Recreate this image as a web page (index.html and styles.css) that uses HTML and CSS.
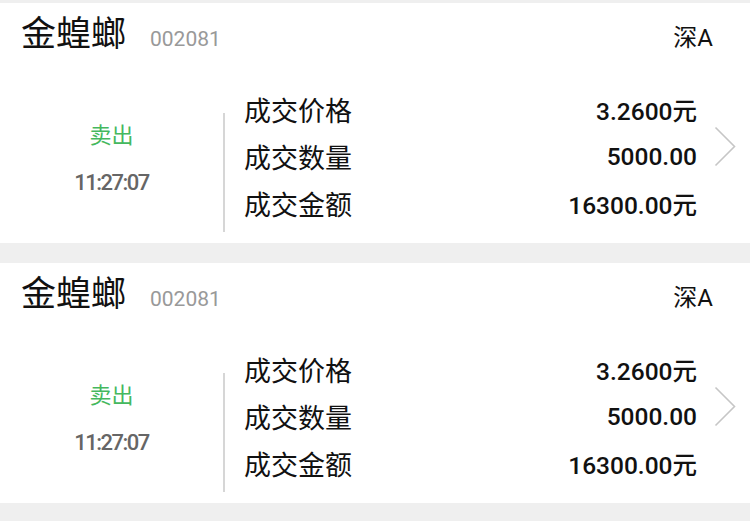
FILE: index.html
```html
<!DOCTYPE html>
<html lang="zh-CN">
<head>
<meta charset="utf-8">
<title>成交记录</title>
<link rel="stylesheet" href="styles.css">
</head>
<body>
<div class="list">
  <div class="card">
    <div class="head">
      <span class="name">金蝗螂</span>
      <span class="code">002081</span>
      <span class="market">深A</span>
    </div>
    <div class="body">
      <div class="side">
        <div class="dir">卖出</div>
        <div class="time">11:27:07</div>
      </div>
      <div class="divider"></div>
      <div class="info">
        <div class="row"><span class="label">成交价格</span><span class="val">3.2600元</span></div>
        <div class="row"><span class="label">成交数量</span><span class="val">5000.00</span></div>
        <div class="row"><span class="label">成交金额</span><span class="val">16300.00元</span></div>
      </div>
      <div class="arrow">
        <svg width="22" height="42" viewBox="0 0 22 42"><polyline points="1.5,1.5 20.5,20.5 1.5,39.5" fill="none" stroke="#c6c6c6" stroke-width="1.6"/></svg>
      </div>
    </div>
  </div>
  <div class="card">
    <div class="head">
      <span class="name">金蝗螂</span>
      <span class="code">002081</span>
      <span class="market">深A</span>
    </div>
    <div class="body">
      <div class="side">
        <div class="dir">卖出</div>
        <div class="time">11:27:07</div>
      </div>
      <div class="divider"></div>
      <div class="info">
        <div class="row"><span class="label">成交价格</span><span class="val">3.2600元</span></div>
        <div class="row"><span class="label">成交数量</span><span class="val">5000.00</span></div>
        <div class="row"><span class="label">成交金额</span><span class="val">16300.00元</span></div>
      </div>
      <div class="arrow">
        <svg width="22" height="42" viewBox="0 0 22 42"><polyline points="1.5,1.5 20.5,20.5 1.5,39.5" fill="none" stroke="#c6c6c6" stroke-width="1.6"/></svg>
      </div>
    </div>
  </div>
</div>
</body>
</html>
```

FILE: styles.css
```css
html, body {
  margin: 0;
  padding: 0;
  background: #efefef;
  font-family: Roboto, "Noto Sans CJK SC", sans-serif;
  color: #111;
}
.list {
  padding-top: 3px;
  display: flex;
  flex-direction: column;
  gap: 20px;
}
.card {
  background: #fff;
  height: 240px;
  box-sizing: border-box;
}
.head {
  display: flex;
  align-items: baseline;
  padding: 8px 37px 0 21px;
  height: 49px;
  box-sizing: border-box;
}
.name {
  font-family: "Noto Sans CJK SC", sans-serif;
  font-size: 35px;
  line-height: 40px;
  color: #111;
}
.code {
  font-size: 21px;
  color: #999;
  margin-left: 24px;
}
.market {
  margin-left: auto;
  font-size: 24px;
  color: #111;
  font-family: Roboto, "Noto Sans CJK SC", sans-serif;
}
.body {
  display: flex;
  padding-top: 36px;
  height: 144px;
}
.side {
  width: 223px;
  display: flex;
  flex-direction: column;
  align-items: center;
  padding-top: 21px;
  box-sizing: border-box;
}
.dir {
  font-family: "Noto Sans CJK SC", sans-serif;
  font-size: 22px;
  line-height: 48px;
  color: #45b85e;
}
.time {
  font-size: 22px;
  line-height: 48px;
  color: #666;
  letter-spacing: -1.5px;
  font-weight: 500;
  margin-top: 2px;
}
.divider {
  width: 2px;
  background: #d6d6d6;
  margin-top: 25px;
  height: 119px;
}
.info {
  flex: 1;
  padding-left: 19px;
  display: flex;
  flex-direction: column;
  margin-top: -2px;
}
.row {
  display: flex;
  justify-content: space-between;
  align-items: center;
  height: 47px;
}
.label {
  font-family: "Noto Sans CJK SC", sans-serif;
  font-size: 27px;
  color: #111;
}
.val {
  font-size: 24.5px;
  font-weight: 500;
  color: #111;
}
.arrow {
  width: 53px;
  padding-left: 17px;
  box-sizing: border-box;
  margin-top: 38px;
}
.arrow svg {
  display: block;
}
```
